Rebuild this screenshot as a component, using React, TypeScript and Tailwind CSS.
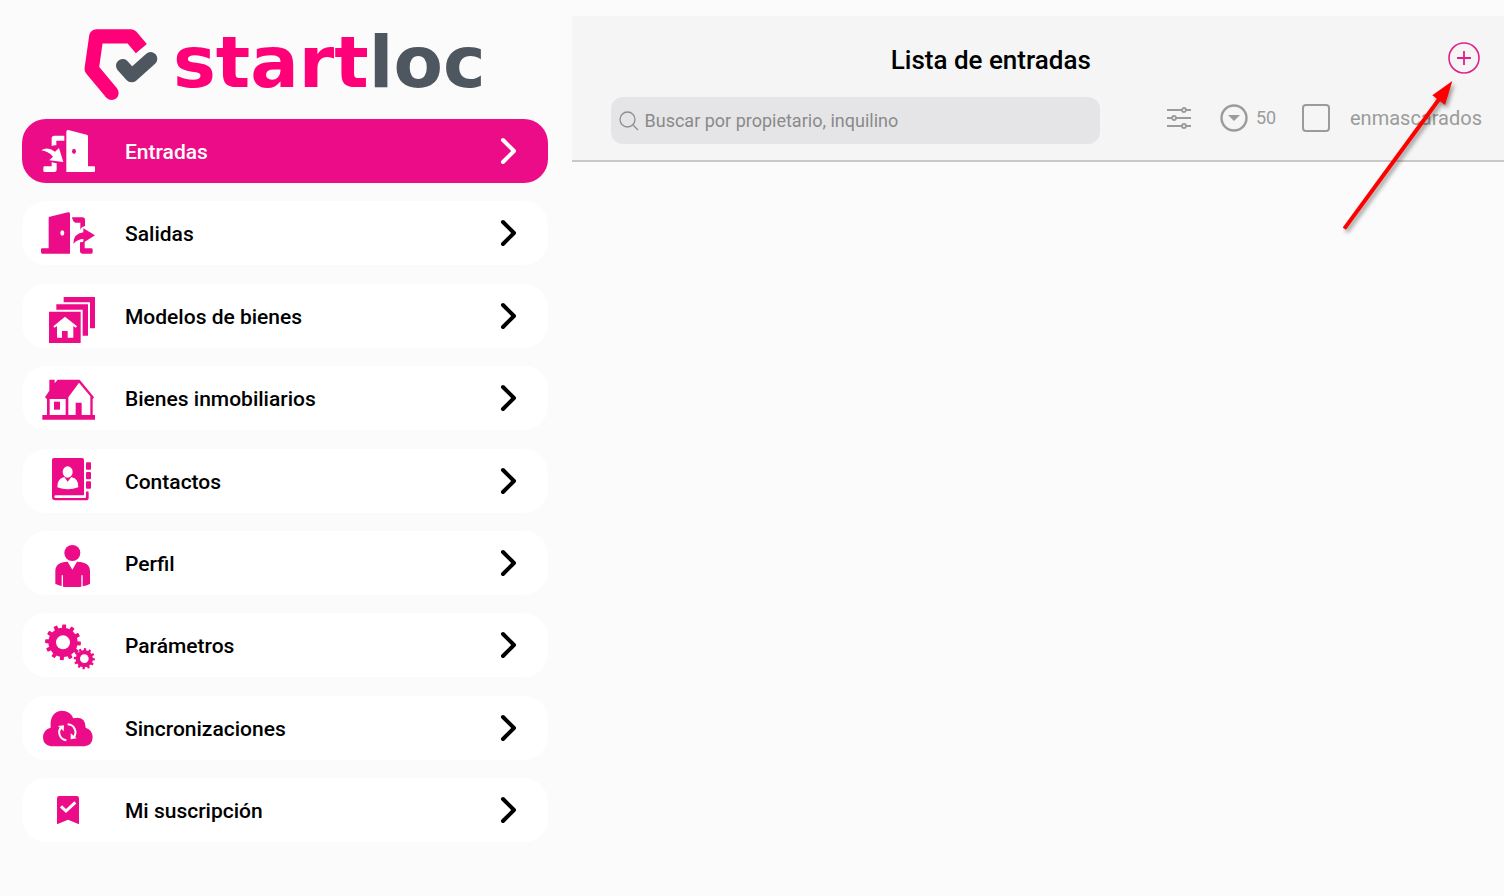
import type { ReactNode } from "react"
import clsx from "clsx"

function DoorInIcon() {
  return (
    <svg viewBox="63 36 168 144" className="h-12 w-14" fill="currentColor" aria-hidden="true">
      <path d="M145 45 L200 59 Q204 60 204 64 V154 H222 Q225 154 225 157 V168 Q225 171 222 171 H139 V51 Q139 44 145 45Z" />
      <ellipse cx="162" cy="109" rx="6" ry="8" className="fill-[#ed0c87]" />
      <path d="M133 62 V77 H109 V91 Q102 90 95 93 V70 Q95 62 103 62Z" />
      <path d="M64 106 Q82 93 105 110 L117 99 L130 141 L88 136 L99 125 Q84 108 64 106Z" />
      <path d="M95 142 L110 145 V164 Q110 171 103 171 H74 Q70 171 70 167 V158 Q70 154 74 154 H95Z" />
    </svg>
  )
}

function DoorOutIcon() {
  return (
    <svg viewBox="63 283 168 144" className="h-12 w-14" fill="currentColor" aria-hidden="true">
      <path d="M144 293 Q150 291 150 298 V417 H67 Q63 417 63 413 V404 Q63 401 67 401 H86 V310 Q86 307 89 306Z" />
      <ellipse cx="127" cy="355" rx="6" ry="8" className="fill-white" />
      <path d="M156 308 H187 Q195 308 195 316 V334 L186 338 L181 345 V324 H166 Q159 322 156 308Z" />
      <path d="M190 341 L225 362 L190 384 V373 Q174 373 160 387 Q160 357 190 353Z" />
      <path d="M180 383 L194 381 V401 H214 Q218 401 218 405 V413 Q218 417 214 417 H187 Q180 417 180 410Z" />
    </svg>
  )
}

function ModelsIcon() {
  return (
    <svg viewBox="33 35 168 144" className="h-12 w-14 overflow-visible" fill="currentColor" aria-hidden="true">
      <path d="M101 50 H195 V144 H180 V66 H101Z" />
      <path d="M79 72 H174 V166 H158 V88 H79Z" />
      <path d="M57 94 H152 V188 H57Z" />
      <path d="M105 109 L141 138 L137 142 L130 137 V172 H113 V152 H96 V172 H81 V137 L74 142 L70 138Z" className="fill-white" />
    </svg>
  )
}

function HouseIcon() {
  return (
    <svg viewBox="33 282 168 144" className="h-12 w-14" fill="currentColor" aria-hidden="true">
      <path d="M58 299 H74 V310 L83 299 H149 L192 352 L188 357 V405 H195 V419 H37 V405 H51 V357 L45 352 L58 332Z" />
      <path d="M59 357 H107 V405 H59Z" className="fill-white" />
      <path d="M147 308 L181 349 V405 H155 V368 H137 V405 H115 V352Z" className="fill-white" />
      <path d="M72 365 H90 V389 H72Z" />
    </svg>
  )
}

function ContactsIcon() {
  return (
    <svg viewBox="33 35 168 144" className="h-12 w-14" fill="currentColor" aria-hidden="true">
      <path d="M72 38 H156 Q162 38 162 44 V150 H78 Q73 150 73 154 Q73 158 78 158 H165 Q168 158 168 154 V142 Q168 138 172 138 Q176 138 176 142 V157 Q176 165 168 165 H76 Q66 165 66 155 V44 Q66 38 72 38Z" />
      <rect x="168" y="51" width="15" height="22" rx="3" />
      <rect x="168" y="80" width="15" height="22" rx="3" />
      <rect x="168" y="108" width="15" height="22" rx="3" />
      <g className="fill-white">
        <ellipse cx="113" cy="80" rx="15" ry="17" />
        <path d="M103 95 L113 109 L124 95 Q146 99 145 126 Q113 138 82 126 Q81 99 103 95Z" />
      </g>
    </svg>
  )
}

function PersonIcon() {
  return (
    <svg viewBox="33 282 168 144" className="h-12 w-14" fill="currentColor" aria-hidden="true">
      <circle cx="127" cy="324" r="24" />
      <path d="M113 350 L127 374 L141 350 Q180 351 180 378 V416 Q174 421 158 424 V391 H154 V425 Q128 428 99 425 V391 H95 V423 Q82 420 76 416 V378 Q76 351 113 350Z" />
    </svg>
  )
}

type GearProps = {
  cx: number
  cy: number
  r: number
  tooth: number
  hole: number
}

function Gear({ cx, cy, r, tooth, hole }: GearProps) {
  return (
    <g>
      {Array.from({ length: 12 }, (_, i) => (
        <rect
          key={i}
          x={cx - tooth / 2}
          y={cy - r * 1.22}
          width={tooth}
          height={r / 2}
          rx={tooth / 5}
          transform={`rotate(${i * 30 + 4} ${cx} ${cy})`}
        />
      ))}
      <circle cx={cx} cy={cy} r={r} />
      <circle cx={cx} cy={cy} r={hole} className="fill-white" />
    </g>
  )
}

function GearsIcon() {
  return (
    <svg viewBox="33 34 168 144" className="h-12 w-14 overflow-visible" fill="currentColor" aria-hidden="true">
      <Gear cx={99} cy={98} r={44} tooth={12} hole={21} />
      <Gear cx={163} cy={147} r={26} tooth={7} hole={13} />
    </svg>
  )
}

function CloudSyncIcon() {
  return (
    <svg viewBox="33 281 168 144" className="h-12 w-14" fill="currentColor" aria-hidden="true">
      <path d="M63 408 Q39 405 39 380 Q40 358 62 352 Q58 305 95 301 Q121 301 130 324 Q166 314 167 352 Q188 359 188 381 Q187 405 164 408Z" />
      <g className="fill-none stroke-white" strokeWidth="6">
        <path d="M109 390 A24 24 0 0 1 93 351" />
        <path d="M113 342 A24 24 0 0 1 131 381" />
      </g>
      <path d="M84 347 L102 345 L101 363Z" className="fill-white" />
      <path d="M122 369 L122 387 L140 384Z" className="fill-white" />
    </svg>
  )
}

function BookmarkIcon() {
  return (
    <svg viewBox="63 48 168 144" className="h-12 w-14" fill="currentColor" aria-hidden="true">
      <path d="M118 78 H170 Q177 78 177 85 V163 L144 149 L111 163 V85 Q111 78 118 78Z" />
      <path d="M123 109 L138 123 L166 97" className="fill-none stroke-white" strokeWidth="9" />
    </svg>
  )
}

function Chevron() {
  return (
    <svg viewBox="0 0 18 30" className="h-[30px] w-[18px]" fill="none" stroke="currentColor" strokeWidth="4" strokeLinecap="round" strokeLinejoin="round" aria-hidden="true">
      <path d="M3 4 L14 15 L3 26" />
    </svg>
  )
}

const menu: { label: string; icon: ReactNode }[] = [
  { label: "Entradas", icon: <DoorInIcon /> },
  { label: "Salidas", icon: <DoorOutIcon /> },
  { label: "Modelos de bienes", icon: <ModelsIcon /> },
  { label: "Bienes inmobiliarios", icon: <HouseIcon /> },
  { label: "Contactos", icon: <ContactsIcon /> },
  { label: "Perfil", icon: <PersonIcon /> },
  { label: "Parámetros", icon: <GearsIcon /> },
  { label: "Sincronizaciones", icon: <CloudSyncIcon /> },
  { label: "Mi suscripción", icon: <BookmarkIcon /> },
]

function Logo() {
  return (
    <div className="flex h-[119px] items-center gap-3.5 pt-2.5 pl-[62px]">
      <svg viewBox="42 40 225 219" className="h-[73px] w-[75px] shrink-0" fill="none" aria-hidden="true">
        <path d="M214 102 L183 65 L79 65 L65 163 L125 235" stroke="#ff0078" strokeWidth="43" strokeLinejoin="round" />
        <circle cx="125" cy="235" r="21" fill="#ff0078" />
        <path d="M158 153 L185 183 L242 132" stroke="#4e565f" strokeWidth="40" strokeLinecap="round" strokeLinejoin="round" />
      </svg>
      <span className="pb-1.5 font-['DejaVu_Sans',sans-serif] text-[72px] leading-none font-bold text-[#ff0078]">
        start<span className="text-[#4e565f]">loc</span>
      </span>
    </div>
  )
}

function Sidebar() {
  return (
    <aside className="flex w-[38%] flex-col pr-6 pb-[54px] pl-[22px]">
      <Logo />
      <nav className="flex flex-1 flex-col">
        <ul className="flex flex-1 flex-col justify-between">
          {menu.map((item, i) => (
            <li key={item.label}>
              <a
                href="#"
                className={clsx(
                  "flex h-16 items-center rounded-3xl pr-[30px] pl-[19px]",
                  i === 0 ? "bg-[#ed0c87] text-white" : "bg-white text-black"
                )}
              >
                <span className={clsx("shrink-0", i !== 0 && "text-[#ed0c87]")}>{item.icon}</span>
                <span className="ml-7 flex-1 pt-0.5 text-[21px] leading-7 font-medium">{item.label}</span>
                <Chevron />
              </a>
            </li>
          ))}
        </ul>
      </nav>
    </aside>
  )
}

function Toolbar() {
  return (
    <div className="mt-[22px] flex items-center pr-[22px] pl-[39px] text-[#9b9b9b]">
      <label className="flex h-[47px] flex-1 items-center gap-1.5 rounded-xl bg-[#e5e5e7] px-2">
        <svg viewBox="0 0 20 20" className="size-5 shrink-0" fill="none" stroke="#8e8e8e" strokeWidth="1.3" aria-hidden="true">
          <circle cx="8.5" cy="8.5" r="7.5" />
          <path d="M14 14 L19 19" />
        </svg>
        <input
          type="text"
          aria-label="Buscar"
          placeholder="Buscar por propietario, inquilino"
          className="min-w-0 flex-1 bg-transparent text-lg outline-none placeholder:text-[#8a8a8a]"
        />
      </label>
      <div className="ml-[66px] flex items-center pb-1.5">
        <button type="button" aria-label="Filtros">
          <svg viewBox="0 0 26 24" className="h-6 w-[26px]" fill="none" stroke="currentColor" strokeWidth="1.8" aria-hidden="true">
            <path d="M1 4 H16 M20 4 H25 M1 12 H6 M10 12 H25 M1 20 H16 M20 20 H25" />
            <circle cx="18" cy="4" r="2" />
            <circle cx="8" cy="12" r="2" />
            <circle cx="18" cy="20" r="2" />
          </svg>
        </button>
        <label className="ml-7 flex items-center gap-2">
          <svg viewBox="0 0 28 28" className="size-7" aria-hidden="true">
            <circle cx="14" cy="14" r="12.5" fill="none" stroke="currentColor" strokeWidth="2.4" />
            <path d="M8 11 H20 L14 17Z" fill="currentColor" />
          </svg>
          <select aria-label="Resultados" className="w-6 appearance-none bg-transparent text-lg outline-none">
            <option>50</option>
          </select>
        </label>
        <label className="ml-[22px] flex items-center gap-5">
          <input type="checkbox" className="size-7 appearance-none rounded-sm border-2 border-[#9b9b9b]" />
          <span className="text-xl leading-7">enmascarados</span>
        </label>
      </div>
    </div>
  )
}

function PointerArrow() {
  return (
    <svg
      viewBox="600 171 360 480"
      className="pointer-events-none absolute top-[61px] right-11 h-40 w-[120px] overflow-visible drop-shadow-[2px_3px_2px_rgba(0,0,0,0.4)]"
      aria-hidden="true"
    >
      <path d="M613 626 L900 234" stroke="#ff0000" strokeWidth="12" />
      <path d="M937 183 L877 226 L915 255Z" fill="#ff0000" />
    </svg>
  )
}

export default function App() {
  return (
    <div className="flex min-h-screen bg-[#fbfbfb] font-[Roboto,sans-serif]">
      <Sidebar />
      <main className="flex-1 pt-4">
        <header className="relative border-b-2 border-[#c9c9c9] bg-[#f5f5f5] pt-[25px] pb-4">
          <div className="flex h-[34px] items-center pr-[23px] pl-10">
            <h1 className="flex-1 pt-1 text-center text-[26px] leading-8 font-medium text-black">
              Lista de entradas
            </h1>
            <button type="button" aria-label="Añadir" className="ml-[77px] text-[#e0218a]">
              <svg viewBox="0 0 34 34" className="size-[34px]" fill="none" stroke="currentColor" aria-hidden="true">
                <circle cx="17" cy="17" r="15" strokeWidth="1.6" />
                <path d="M17 10 V24 M10 17 H24" strokeWidth="1.8" />
              </svg>
            </button>
          </div>
          <Toolbar />
          <PointerArrow />
        </header>
      </main>
    </div>
  )
}
